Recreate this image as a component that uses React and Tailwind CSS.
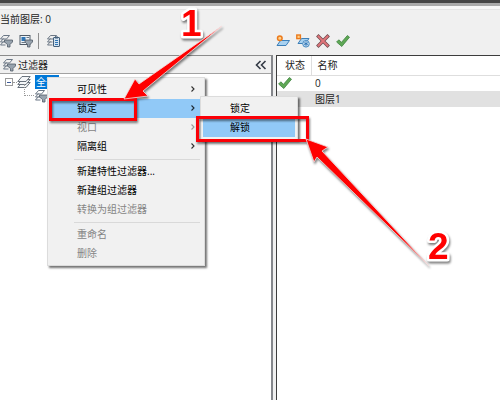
import { useState } from "react";

const filterMenu = [
  [
    { label: "可见性", sub: true },
    { label: "锁定", sub: true },
    { label: "视口", sub: true, disabled: true },
    { label: "隔离组", sub: true },
  ],
  [
    { label: "新建特性过滤器..." },
    { label: "新建组过滤器" },
    { label: "转换为组过滤器", disabled: true },
  ],
  [
    { label: "重命名", disabled: true },
    { label: "删除", disabled: true },
  ],
];

const layers = [
  { name: "0", current: true },
  { name: "图层1", current: false },
];

/* ---------- icons ---------- */

const Sheets = () => (
  <g fill="none" stroke="#6b7785" strokeWidth="1">
    <path d="M4.5 1.5h6M4.5 1.5l-3 3.5h6M4.5 4.5L1.5 8h5M4.5 7.5L1.5 11h5" />
    <path d="M7.5 5l3-3.5" />
  </g>
);

const FilterIcon = () => (
  <svg viewBox="0 0 14 14" className="size-3.5">
    <Sheets />
    <path d="M5.5 6h8v2L11 10.5V13H8.5v-2.5L5.5 8z" fill="#98a3ae" stroke="#515c68" strokeWidth=".8" />
  </svg>
);

const GroupFilterIcon = () => (
  <svg viewBox="0 0 14 14" className="size-3.5">
    <rect x="1" y="1.5" width="10" height="9" fill="#eef3f7" stroke="#515c68" />
    <path d="M2.5 3h4v4h-4z" fill="#2f75b5" />
    <path d="M7.5 3.5h2.5M2.5 8.5h4" stroke="#6b7785" />
    <path d="M6 6h7.5v2L11 10.5V13H8.5v-2.5L6 8z" fill="#98a3ae" stroke="#515c68" strokeWidth=".8" />
  </svg>
);

const StatesIcon = () => (
  <svg viewBox="0 0 14 14" className="size-3.5">
    <Sheets />
    <rect x="7.5" y="3.5" width="6" height="9" rx=".5" fill="#d3e3f1" stroke="#44607c" />
    <path d="M9 2.5h3v2H9z" fill="#44607c" />
    <path d="M9 6.5h3M9 8.5h3M9 10.5h3" stroke="#2f75b5" />
  </svg>
);

const StackIcon = () => (
  <svg viewBox="0 0 14 14" className="size-3.5">
    <g fill="#f4f6f8" stroke="#59636e" strokeWidth=".9">
      <path d="M.8 12.5L5 7.5h8.2L9 12.5z" />
      <path d="M.8 9.5L5 4.5h8.2L9 9.5z" />
      <path d="M.8 6.5L5 1.5h8.2L9 6.5z" />
    </g>
  </svg>
);

const NewLayerIcon = () => (
  <svg viewBox="0 0 14 14" className="size-3.5">
    <path d="M1 11.5L4.5 6.5h9L10 11.5z" fill="#a8d1f0" stroke="#3c7fb8" />
    <circle cx="3.8" cy="4.3" r="2.3" fill="#ffd28a" stroke="#ec7a1c" strokeWidth="1.5" />
  </svg>
);

const NewFrozenIcon = () => (
  <svg viewBox="0 0 14 14" className="size-3.5">
    <path d="M2 9.5l3.5-5H13l-3.5 5z" fill="#a8d1f0" stroke="#3c7fb8" />
    <rect x=".8" y="1" width="3.6" height="3.6" fill="#ffd28a" stroke="#ec7a1c" strokeWidth="1.4" />
    <circle cx="10" cy="9.8" r="3.3" fill="#d6e9f8" stroke="#4a8bc2" strokeWidth="1" />
    <path d="M10 7.2v5.2M7.8 8.5l4.4 2.6M12.2 8.5l-4.4 2.6" stroke="#2f75b5" strokeWidth=".9" />
  </svg>
);

const CrossIcon = () => (
  <svg viewBox="0 0 14 14" className="size-3.5">
    <path d="M2.5 2.5l9 9M11.5 2.5l-9 9" stroke="#6d4a4e" strokeWidth="3.4" strokeLinecap="square" />
    <path d="M2.5 2.5l9 9M11.5 2.5l-9 9" stroke="#e0757a" strokeWidth="2" strokeLinecap="square" />
  </svg>
);

const CheckIcon = () => (
  <svg viewBox="0 0 14 14" className="size-3.5">
    <path d="M.6 8L2.8 5.8l2.7 2.5L11.4 1.5 13.5 3.2 5.8 12.5z" fill="#5fa855" stroke="#3f8440" strokeWidth=".8" />
  </svg>
);

const Chevron = () => (
  <svg viewBox="0 0 6 8" className="h-2 w-1.5 fill-none stroke-current opacity-80">
    <path d="M1.5 1.5L4 4 1.5 6.5" strokeWidth="1.1" />
  </svg>
);

/* ---------- parts ---------- */

function ToolButton({ label, children }) {
  return (
    <button type="button" title={label} aria-label={label} className="flex size-5 items-center justify-center">
      {children}
    </button>
  );
}

function MenuItem({ item, active, onHover }) {
  return (
    <button
      type="button"
      role="menuitem"
      disabled={item.disabled}
      aria-haspopup={item.sub ? "menu" : undefined}
      onMouseEnter={onHover}
      className={`flex h-[19px] w-full items-center justify-between pr-1.5 pb-0.5 pl-[27px] text-left whitespace-nowrap ${
        active ? "bg-[#91c9f7]" : ""
      } ${item.disabled ? "text-[#858585]" : "text-black"}`}
    >
      {item.label}
      {item.sub && <Chevron />}
    </button>
  );
}

function ContextMenu() {
  const [open, setOpen] = useState("锁定");

  return (
    <div
      role="menu"
      className="absolute top-[3px] left-[47px] z-10 w-[158px] border border-[#dcdcdc] bg-[#f1f1f1] p-0.5 shadow-[2px_2px_2px_rgba(0,0,0,0.55)]"
    >
      {filterMenu.map((group, i) => (
        <div key={i}>
          {i > 0 && <hr className="mt-[3px] mr-0.5 mb-0.5 ml-6 h-px border-0 bg-[#d9d9d9]" />}
          {group.map((item) => (
            <div key={item.label} className="relative">
              <MenuItem
                item={item}
                active={open === item.label}
                onHover={() => item.sub && setOpen(item.label)}
              />
              {item.label === "锁定" && open === "锁定" && (
                <div
                  role="menu"
                  className="absolute -top-[3px] left-full z-10 -ml-0.5 w-[98px] border border-[#dcdcdc] bg-[#f1f1f1] p-0.5 shadow-[2px_2px_2px_rgba(0,0,0,0.55)]"
                >
                  <MenuItem item={{ label: "锁定" }} />
                  <MenuItem item={{ label: "解锁" }} active />
                </div>
              )}
            </div>
          ))}
        </div>
      ))}
    </div>
  );
}

/* numbered red arrows and frames over the dialog */
function Callouts() {
  return (
    <svg
      width="500"
      height="400"
      className="pointer-events-none absolute top-0 left-0 z-20 drop-shadow-[1px_2px_1px_rgba(0,0,0,0.5)]"
    >
      <g fill="none" stroke="#fb0007" strokeWidth="3">
        <rect x="50.5" y="99.5" width="85" height="20" />
        <rect x="197.5" y="117.5" width="110" height="23" />
      </g>
      <g fill="#ff0000" stroke="#f5dede" strokeWidth=".8" strokeLinejoin="round">
        <path d="M124 99L135 79l4 5L222 26 143 91l5 5z" />
        <path d="M306 139l22 8-6 4L429 266 317 157l-3 5z" />
      </g>
      <g
        fill="#ff0000"
        stroke="#ffffff"
        strokeWidth="5"
        strokeLinejoin="round"
        paintOrder="stroke"
        fontFamily="Liberation Sans, sans-serif"
        fontWeight="700"
        fontSize="37"
      >
        <text x="181" y="36">1</text>
        <text x="428" y="259">2</text>
      </g>
    </svg>
  );
}

export default function App() {
  return (
    <div className="relative flex min-h-screen flex-col overflow-hidden bg-[#f0f0f0] font-['Open_Sans','Noto_Sans_CJK_SC',sans-serif] text-[10px] leading-4 text-[#222]">
      <div className="h-[3px] bg-[#444]" />
      <div className="h-[3px] bg-[#a9a9a9]" />
      <div className="h-1 border-b border-[#e4e4e4] bg-[#f6f6f6]" />

      <p className="mt-px h-4">当前图层: 0</p>

      <div className="mt-1 mb-1 flex h-5 items-center">
        <div className="flex w-[273px] items-center">
          <div className="-ml-1 flex">
            <ToolButton label="新建特性过滤器"><FilterIcon /></ToolButton>
            <ToolButton label="新建组过滤器"><GroupFilterIcon /></ToolButton>
          </div>
          <div className="mr-1 ml-0.5 h-4 w-px bg-[#8e8e8e]" />
          <ToolButton label="图层状态管理器"><StatesIcon /></ToolButton>
        </div>
        <div className="flex">
          <ToolButton label="新建图层"><NewLayerIcon /></ToolButton>
          <ToolButton label="新建冻结图层"><NewFrozenIcon /></ToolButton>
          <ToolButton label="删除图层"><CrossIcon /></ToolButton>
          <ToolButton label="置为当前"><CheckIcon /></ToolButton>
        </div>
      </div>

      <div className="flex flex-1 gap-[3px]">
        <section className="flex w-[273px] shrink-0 flex-col border-t border-r-2 border-t-[#8b8b8b] border-r-[#85878c] bg-white">
          <header className="flex h-[18px] items-center border-b border-[#a2a2a2] bg-[#f0f0f0] pr-0.5 pl-0.5">
            <FilterIcon />
            <h2 className="ml-0.5 flex-1">过滤器</h2>
            <button type="button" aria-label="收拢过滤器树" className="p-0.5">
              <svg viewBox="0 0 12 10" className="h-2.5 w-3 fill-none stroke-[#333a45]">
                <path d="M5.5 1l-4 4 4 4M10.5 1l-4 4 4 4" strokeWidth="1.6" />
              </svg>
            </button>
          </header>

          <div className="relative flex-1">
            <ul role="tree">
              <li role="treeitem" aria-expanded="true">
                <div className="flex h-4 items-center pl-[5px]">
                  <button type="button" aria-label="折叠" className="flex size-2 items-center justify-center border border-[#9a9a9a]">
                    <span className="h-px w-1 bg-[#3d5a99]" />
                  </button>
                  <span className="w-1 border-t border-dotted border-[#999]" />
                  <StackIcon />
                  <span className="ml-1 w-6 bg-[#0078d7] pl-px leading-[14px] text-white">全部</span>
                </div>
                <ul role="group">
                  <li role="treeitem" className="flex h-3 items-center pl-6">
                    <span className="mb-3 h-3 w-2.5 border-b border-l border-dotted border-[#999]" />
                    <FilterIcon />
                  </li>
                </ul>
              </li>
            </ul>
            <ContextMenu />
          </div>
        </section>

        <section className="min-w-0 flex-1 border-t border-l border-[#3d3d3d] bg-white">
          <table className="w-full table-fixed border-collapse text-left">
            <thead>
              <tr className="h-[19px] border-b border-[#dedede]">
                <th className="w-[34px] border-r border-[#dedede] p-0 pl-2 font-normal">状态</th>
                <th className="p-0 pl-1.5 font-normal">名称</th>
              </tr>
            </thead>
            <tbody>
              {layers.map((l) => (
                <tr key={l.name} className={`h-4 leading-[14px] ${l.current ? "" : "bg-[#e1e1e1]"}`}>
                  <td className="p-0 pl-px">{l.current && <CheckIcon />}</td>
                  <td className="p-0 pl-1">{l.name}</td>
                </tr>
              ))}
            </tbody>
          </table>
        </section>
      </div>

      <Callouts />
    </div>
  );
}
